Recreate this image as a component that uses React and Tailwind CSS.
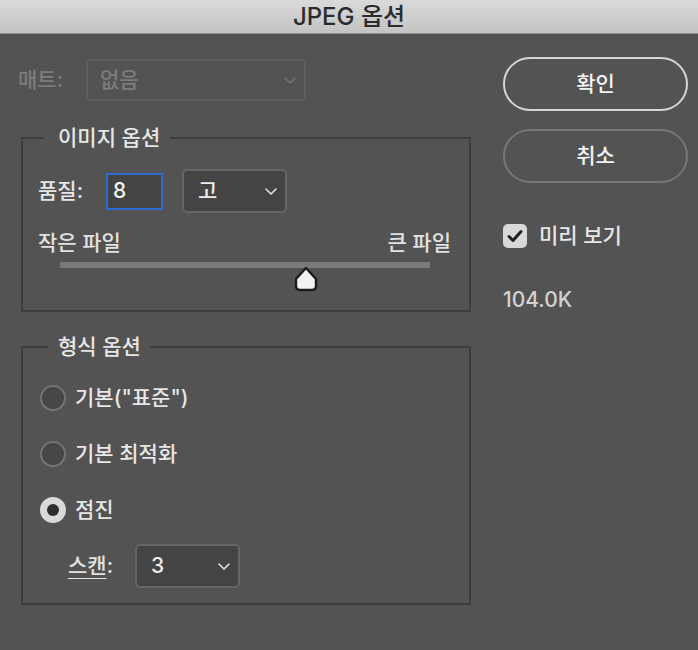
import React from "react";

const FONT = "font-['Inter','Noto_Sans_CJK_KR',sans-serif]";

function Chevron({ className = "stroke-[#e2e2e2]" }) {
  return (
    <svg width="12" height="7" viewBox="0 0 12 7" fill="none" className={className}>
      <polyline points="1,1 6,6 11,1" strokeWidth="1.6" strokeLinecap="round" strokeLinejoin="round" />
    </svg>
  );
}

function Select({ value, w }) {
  return (
    <div
      className={`flex h-[44px] items-center justify-between rounded-[5px] border-2 border-[#666666] bg-[#444444] pl-[14px] pr-[8px] text-[#ececec] ${w}`}
    >
      <span className="leading-[28px]">{value}</span>
      <Chevron />
    </div>
  );
}

function Radio({ label, checked }) {
  return (
    <div className="flex h-[26px] items-center gap-[9px]">
      {checked ? (
        <div className="flex h-[26px] w-[26px] items-center justify-center rounded-full bg-[#d9d9d9]">
          <div className="h-[12px] w-[12px] rounded-full bg-[#2e2e2e]" />
        </div>
      ) : (
        <div className="h-[26px] w-[26px] rounded-full border-2 border-[#737373] bg-[#464646]" />
      )}
      <span className="leading-[28px] text-[#e6e6e6]">{label}</span>
    </div>
  );
}

export default function App() {
  return (
    <div className={`h-[650px] w-[698px] overflow-hidden bg-[#535353] text-[21px] font-medium ${FONT}`}>
      {/* title bar */}
      <div className="flex h-[34px] items-center justify-center border-b border-[#8f8f8f] bg-gradient-to-b from-[#dadada] to-[#c3c3c3]">
        <span className="text-[24px] leading-[28px] text-[#2b2b2b]">JPEG 옵션</span>
      </div>

      <div className="flex">
        {/* left column */}
        <div className="w-[485px] pl-[18px] pt-[25px]">
          <div className="flex h-[42px] items-center">
            <span className="w-[68px] leading-[28px] text-[#7c7c7c]">매트:</span>
            <div className="flex h-[42px] w-[220px] items-center justify-between rounded-[5px] border-2 border-[#5e5e5e] pl-[12px] pr-[8px] text-[#7c7c7c]">
              <span className="leading-[28px]">없음</span>
              <Chevron className="stroke-[#727272]" />
            </div>
          </div>

          <fieldset className="ml-[3px] mt-[23px] w-[450px] border-2 border-[#3e3e3e]">
            <legend className="ml-[21px] pl-[14px] pr-[10px] leading-[28px] text-[#e6e6e6]">이미지 옵션</legend>
            <div className="pl-[15px] pr-[18px] pt-[17px] pb-[17px]">
              <div className="flex h-[44px] items-center">
                <span className="w-[68px] leading-[28px] text-[#e6e6e6]">품질:</span>
                <div className="flex h-[37px] w-[57px] items-center border-2 border-[#2f6cd2] bg-[#444444] pl-[5px] text-[#f2f2f2]">
                  8
                </div>
                <div className="ml-[19px]">
                  <Select value="고" w="w-[105px]" />
                </div>
              </div>
              <div className="mt-[16px] flex justify-between leading-[28px] text-[#e2e2e2]">
                <span>작은 파일</span>
                <span>큰 파일</span>
              </div>
              <div className="relative ml-[22px] mt-[5px] h-[6px] w-[370px] bg-[#7a7a7a]">
                <svg
                  width="26"
                  height="26"
                  viewBox="0 0 26 26"
                  className="absolute left-[233px] top-[4px]"
                >
                  <path
                    d="M13 2 L23 13 L23 20 Q23 24 19 24 L7 24 Q3 24 3 20 L3 13 Z"
                    fill="#f2f2f2"
                    stroke="#1c1c1c"
                    strokeWidth="2.4"
                    strokeLinejoin="round"
                  />
                </svg>
              </div>
              <div className="h-[25px]" />
            </div>
          </fieldset>

          <fieldset className="ml-[3px] mt-[21px] w-[450px] border-2 border-[#3e3e3e]">
            <legend className="ml-[25px] pl-[10px] pr-[9px] leading-[28px] text-[#e6e6e6]">형식 옵션</legend>
            <div className="flex flex-col gap-[30px] pl-[17px] pt-[24px]">
              <Radio label={'기본("표준")'} />
              <Radio label="기본 최적화" />
              <Radio label="점진" checked />
            </div>
            <div className="flex items-center pb-[15px] pl-[45px] pt-[21px]">
              <span className="w-[67px] leading-[28px] text-[#e2e2e2]">
                <span className="underline decoration-1 underline-offset-[5px]">스캔</span>:
              </span>
              <Select value="3" w="w-[105px]" />
            </div>
          </fieldset>
        </div>

        {/* right column */}
        <div className="ml-[18px] flex w-[185px] flex-col pt-[23px]">
          <div className="flex h-[54px] items-center justify-center rounded-full border-2 border-[#d6d6d6] text-[#f2f2f2]">
            확인
          </div>
          <div className="mt-[18px] flex h-[54px] items-center justify-center rounded-full border-2 border-[#767676] text-[#f2f2f2]">
            취소
          </div>
          <div className="mt-[39px] flex items-center gap-[12px]">
            <div className="flex h-[24px] w-[24px] items-center justify-center rounded-[5px] bg-[#d8d8d8]">
              <svg width="16" height="14" viewBox="0 0 16 14" fill="none">
                <polyline
                  points="2,7.5 6,11.5 14,2.5"
                  stroke="#222222"
                  strokeWidth="3"
                  strokeLinecap="round"
                  strokeLinejoin="round"
                />
              </svg>
            </div>
            <span className="leading-[28px] text-[#e6e6e6]">미리 보기</span>
          </div>
          <div className="mt-[36px] leading-[28px] text-[#d2d2d2]">104.0K</div>
        </div>
      </div>
    </div>
  );
}
